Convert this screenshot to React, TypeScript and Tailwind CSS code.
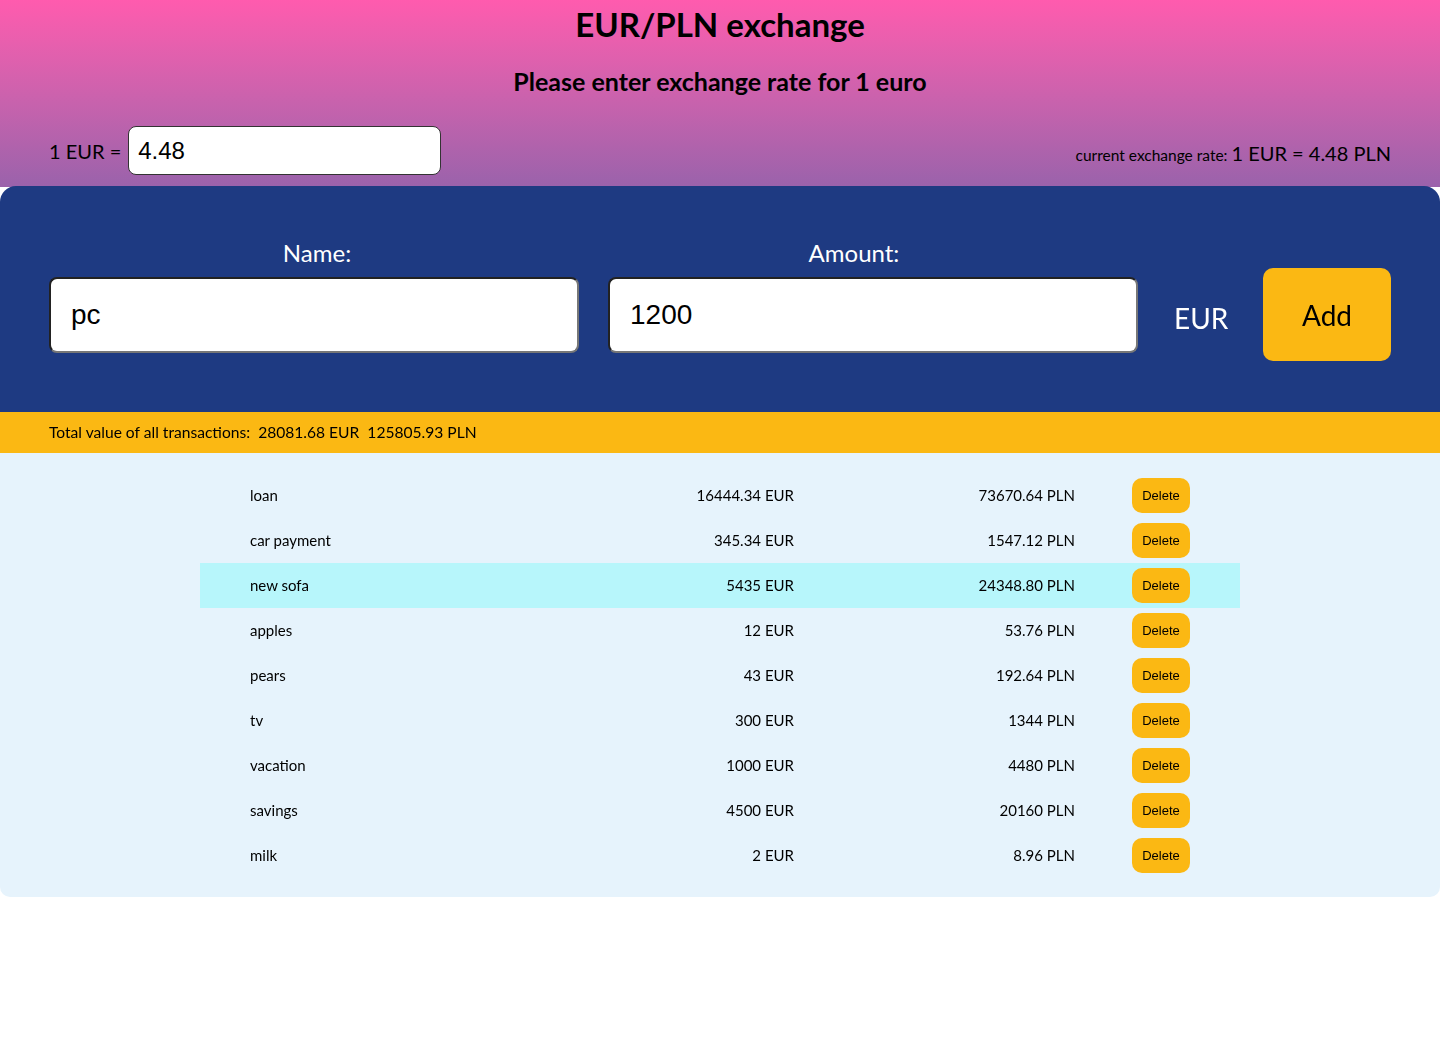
import { useState } from "react";

type Tx = { id: number; name: string; eur: string; pln: string };

const transactions: Tx[] = [
  { id: 1, name: "loan", eur: "16444.34", pln: "73670.64" },
  { id: 2, name: "car payment", eur: "345.34", pln: "1547.12" },
  { id: 3, name: "new sofa", eur: "5435", pln: "24348.80" },
  { id: 4, name: "apples", eur: "12", pln: "53.76" },
  { id: 5, name: "pears", eur: "43", pln: "192.64" },
  { id: 6, name: "tv", eur: "300", pln: "1344" },
  { id: 7, name: "vacation", eur: "1000", pln: "4480" },
  { id: 8, name: "savings", eur: "4500", pln: "20160" },
  { id: 9, name: "milk", eur: "2", pln: "8.96" },
];

const ui = "font-['Lato','Noto_Sans',sans-serif]";
const arial = "font-['Liberation_Sans',Arial,sans-serif]";

export default function App() {
  const [rate, setRate] = useState("4.48");
  const [name, setName] = useState("pc");
  const [amount, setAmount] = useState("1200");

  return (
    <div className={`${ui} min-h-[1039px] bg-white text-black`}>
      <header className="bg-gradient-to-b from-[#ff5bae] to-[#9a62ab] pb-[12px]">
        <h1 className="pt-[3px] text-center text-[33px] leading-[42px] font-bold">EUR/PLN exchange</h1>
        <h2 className="mt-[21px] text-center text-[25px] leading-[30px] font-bold">
          Please enter exchange rate for 1 euro
        </h2>
        <div className="mt-[30px] flex items-end justify-between px-[49px]">
          <label className="flex items-center gap-[7px] text-[20px]">
            1 EUR =
            <input
              value={rate}
              onChange={(e) => setRate(e.target.value)}
              className={`${arial} h-[49px] w-[313px] rounded-[8px] border border-[#333] bg-white px-[9px] text-[24px] outline-none`}
            />
          </label>
          <p className="pb-[8px] text-[20px] leading-[24px]">
            <span className="text-[15.5px]">current exchange rate: </span>1 EUR = {rate} PLN
          </p>
        </div>
      </header>

      <section className="-mt-px rounded-t-[16px] bg-[#1e3a82] px-[49px] pt-[49px] pb-[59px]">
        <div className="flex items-end gap-[29px]">
          <label className="flex w-[530px] flex-col items-center gap-[6px] text-[24px] text-white">
            <span className="pl-[6px]">Name:</span>
            <input
              value={name}
              onChange={(e) => setName(e.target.value)}
              className={`${arial} h-[76px] w-full rounded-[8px] border-2 border-t-[#222] border-l-[#222] border-r-[#777] border-b-[#777] bg-white px-[20px] text-[28px] text-black outline-none`}
            />
          </label>
          <label className="flex w-[530px] flex-col items-center gap-[6px] text-[24px] text-white">
            <span className="pr-[38px]">Amount:</span>
            <input
              value={amount}
              autoFocus
              onChange={(e) => setAmount(e.target.value)}
              className={`${arial} h-[76px] w-full rounded-[8px] border-2 border-t-[#222] border-l-[#222] border-r-[#777] border-b-[#777] bg-white px-[20px] text-[28px] text-black caret-black outline-none`}
            />
          </label>
          <span className="ml-[7px] pb-[14px] text-[28px] text-white">EUR</span>
          <button className="mb-[-8px] ml-auto h-[93px] w-[128px] rounded-[10px] bg-[#fbb813] text-[28px]">
            Add
          </button>
        </div>
      </section>

      <div className="bg-[#fbb813] px-[49px] py-[10px] text-[15.6px] leading-[21px] whitespace-pre">
        Total value of all transactions:  28081.68 EUR  125805.93 PLN
      </div>

      <section className="rounded-b-[10px] bg-[#e6f3fc] pt-[20px] pb-[19px]">
        <div className="mx-auto w-[1040px]">
          {transactions.map((t) => (
            <div
              key={t.id}
              className={`grid h-[45px] grid-cols-[300px_294px_281px_1fr] items-center text-[15px] ${
                t.id === 3 ? "bg-[#b7f6fb]" : ""
              }`}
            >
              <span className="pl-[50px]">{t.name}</span>
              <span className="text-right">{t.eur} EUR</span>
              <span className="text-right">{t.pln} PLN</span>
              <div className="pl-[57px]">
                <button className={`${arial} h-[35px] w-[58px] rounded-[10px] bg-[#fbb813] text-[13px]`}>
                  Delete
                </button>
              </div>
            </div>
          ))}
        </div>
      </section>
    </div>
  );
}
